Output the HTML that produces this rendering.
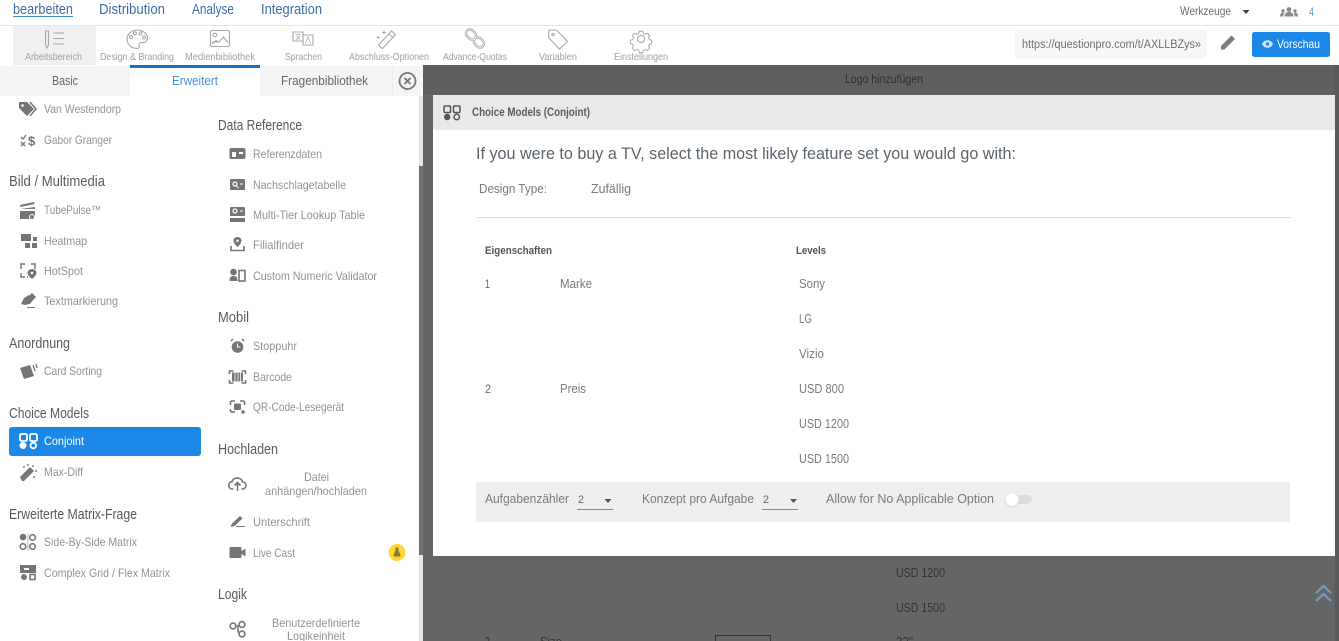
<!DOCTYPE html>
<html lang="de"><head><meta charset="utf-8"><title>Choice Models (Conjoint)</title>
<style>
html,body{margin:0;padding:0;background:#fff;width:1339px;height:641px;overflow:hidden}
svg{display:block;filter:blur(.35px)}
text{font-family:"Liberation Sans",sans-serif}
.nav{font-size:15px;fill:#3a6ea8}
.tb{font-size:10.5px;fill:#a0a0a0}
.it{font-size:12px;fill:#939393}
.h{font-size:15px;fill:#5a5a5a}
.tab{font-size:13px;fill:#666}
.m{font-size:13px;fill:#7a7a7a}
.b{font-size:11px;font-weight:bold;fill:#555}
.d{font-size:12.5px;fill:#333}
.ln{fill:none;stroke:#a8a8a8;stroke-width:1.1}
.ic{fill:#757575}
.is{fill:none;stroke:#757575;stroke-width:1.6}
</style></head><body>
<svg width="1339" height="641" viewBox="0 0 1339 641" xmlns="http://www.w3.org/2000/svg">
<rect width="1339" height="641" fill="#fff"/>
<!-- top nav -->
<rect x="0" y="25" width="1339" height="1" fill="#e6e6e6"/>
<text class="nav" x="13" y="14" textLength="60" lengthAdjust="spacingAndGlyphs">bearbeiten</text>
<rect x="13" y="16" width="60" height="1" fill="#3a8ad0"/>
<text class="nav" x="99" y="14" textLength="66" lengthAdjust="spacingAndGlyphs">Distribution</text>
<text class="nav" x="192" y="14" textLength="42" lengthAdjust="spacingAndGlyphs">Analyse</text>
<text class="nav" x="261" y="14" textLength="61" lengthAdjust="spacingAndGlyphs">Integration</text>
<text x="1180" y="15" font-size="12" fill="#6e6e6e" textLength="51" lengthAdjust="spacingAndGlyphs">Werkzeuge</text>
<path d="M1242.500 10h7l-3.500 4z" fill="#444"/>
<g fill="#8a8a8a"><circle cx="1289" cy="9.500" r="2.400"/><path d="M1284.500 16.500c0-3.500 2-4.500 4.500-4.500s4.500 1 4.500 4.500z"/><circle cx="1283" cy="11" r="1.700"/><path d="M1280 16.500c0-3 1.200-3.800 3-3.800l1 .3-.8 3.500z"/><circle cx="1295" cy="11" r="1.700"/><path d="M1298 16.500c0-3-1.200-3.800-3-3.800l-1 .3.800 3.500z"/></g>
<text x="1309" y="16" font-size="11.500" fill="#5a9bd8" textLength="5" lengthAdjust="spacingAndGlyphs">4</text>
<!-- toolbar -->
<rect x="13" y="26" width="83" height="39" fill="#f0f0f0"/>
<text class="tb" x="25" y="60" textLength="57" lengthAdjust="spacingAndGlyphs">Arbeitsbereich</text>
<text class="tb" x="100" y="60" textLength="74" lengthAdjust="spacingAndGlyphs">Design &amp; Branding</text>
<text class="tb" x="185" y="60" textLength="70" lengthAdjust="spacingAndGlyphs">Medienbibliothek</text>
<text class="tb" x="285" y="60" textLength="37" lengthAdjust="spacingAndGlyphs">Sprachen</text>
<text class="tb" x="349" y="60" textLength="80" lengthAdjust="spacingAndGlyphs">Abschluss-Optionen</text>
<text class="tb" x="443" y="60" textLength="64" lengthAdjust="spacingAndGlyphs">Advance-Quotas</text>
<text class="tb" x="539" y="60" textLength="38" lengthAdjust="spacingAndGlyphs">Variablen</text>
<text class="tb" x="614" y="60" textLength="54" lengthAdjust="spacingAndGlyphs">Einstellungen</text>
<!-- toolbar icons -->
<path class="ln" d="M45.500 31h3v14l-1.500 3-1.500-3zM53 33h11M53 38.500h11M53 44h11"/>
<path class="ln" d="M137 30c6 0 10.500 3.700 10.500 8.300 0 3.400-2.500 4.500-5 4.200-2.800-.3-4.100 1-3.300 3 .7 1.800-.2 2.900-2.200 2.900-5.800 0-9.900-4-9.900-9.200 0-5.200 4.500-9.200 9.900-9.200z"/>
<circle class="ln" cx="131" cy="37" r="1.500"/><circle class="ln" cx="135" cy="33.300" r="1.500"/><circle class="ln" cx="140.500" cy="33.500" r="1.500"/><circle class="ln" cx="144" cy="37.500" r="1.500"/>
<rect class="ln" x="210.500" y="30.500" width="19" height="16" rx="1.500"/><circle class="ln" cx="215" cy="35" r="1.800"/><path class="ln" d="M212 44l4-3.500 3 1.500 4.500-5 4.500 5.500M212 42h6"/>
<path class="ln" d="M293 32h10v9h-10zM303 35h10v10h-10z"/><path d="M295.500 34.500h5M298 34v1.500M296 40l4-4M296.500 36l3.500 3.500M305.500 43l2.500-6 2.500 6" fill="none" stroke="#a8a8a8" stroke-width=".8"/>
<path class="ln" d="M381 47.500l-2.500-2.500 13-14 4 3.500-13 14zM389 34l4 3.500"/><path d="M384 30.500v4M382 32.500h4M378 36v3M376.500 37.500h3" stroke="#a8a8a8" stroke-width=".9" fill="none"/>
<g fill="none" stroke="#a8a8a8"><rect x="465.500" y="30.500" width="11" height="8" rx="4" transform="rotate(45 471 34.500)" stroke-width="2.400"/><rect x="473.500" y="38.500" width="11" height="8" rx="4" transform="rotate(45 479 42.500)" stroke-width="2.400"/></g><g fill="none" stroke="#fff" stroke-width=".7"><rect x="465.500" y="30.500" width="11" height="8" rx="4" transform="rotate(45 471 34.500)"/><rect x="473.500" y="38.500" width="11" height="8" rx="4" transform="rotate(45 479 42.500)"/></g>
<path class="ln" d="M549 30h7.500l11 11.500-8 7.500-11-11.500z"/><circle class="ln" cx="553" cy="34.500" r="1.200"/>
<path class="ln" d="M639 30h4l.6 2.600 2.300 1 2.400-1.300 2.800 2.800-1.300 2.400 1 2.300 2.600.6v4l-2.600.6-1 2.300 1.300 2.400-2.800 2.800-2.400-1.300-2.300 1-.6 2.600h-4l-.6-2.600-2.300-1-2.400 1.300-2.800-2.800 1.300-2.400-1-2.300-2.600-.6v-4l2.600-.6 1-2.300-1.300-2.400 2.800-2.800 2.400 1.300 2.300-1z" transform="translate(641 39) scale(.86) translate(-641 -39)"/><circle class="ln" cx="641" cy="39" r="3.600"/>
<!-- url / preview -->
<rect x="1015" y="30" width="192" height="29" rx="4" fill="#f7f7f7"/>
<text x="1022" y="48" font-size="11.500" fill="#6e6e6e" textLength="179" lengthAdjust="spacingAndGlyphs">https://questionpro.com/t/AXLLBZys&#187;</text>
<path d="M1221 49.500v-3.500l10.500-10.500 3.500 3.500-10.500 10.500z" fill="#7d7d7d"/>
<rect x="1252" y="32" width="78" height="25" rx="2.500" fill="#1b87e6"/>
<path d="M1262 44c2-5 9-5 11 0-2 5-9 5-11 0z" fill="#cfe6fb"/><circle cx="1267.500" cy="44" r="1.700" fill="#1b87e6"/>
<text x="1277" y="48" font-size="12" fill="#fff" textLength="43" lengthAdjust="spacingAndGlyphs">Vorschau</text>
<!-- overlay -->
<rect x="423" y="65" width="916" height="576" fill="#666"/>
<rect x="423" y="65" width="916" height="30" fill="#5f5f5f"/>
<rect x="1335" y="65" width="4" height="576" fill="#5a5a5a"/>
<text x="845" y="83" font-size="11.500" fill="#2f2f2f" textLength="78" lengthAdjust="spacingAndGlyphs">Logo hinzuf&#252;gen</text>
<text class="d" x="896" y="577" textLength="49" lengthAdjust="spacingAndGlyphs">USD 1200</text>
<text class="d" x="896" y="612" textLength="49" lengthAdjust="spacingAndGlyphs">USD 1500</text>
<text class="d" x="485" y="646" textLength="5" lengthAdjust="spacingAndGlyphs">3</text>
<text class="d" x="540" y="646" textLength="22" lengthAdjust="spacingAndGlyphs">Size</text>
<rect x="715.500" y="635.500" width="55" height="12" fill="none" stroke="#333"/>
<text class="d" x="896" y="646" textLength="17" lengthAdjust="spacingAndGlyphs">32"</text>
<path d="M1316 593l7.500-7 7.500 7M1316 601l7.500-7 7.500 7" fill="none" stroke="#6d9cc6" stroke-width="2.200"/>
<!-- modal -->
<rect x="433" y="95" width="902" height="461" fill="#fff"/>
<rect x="433" y="95" width="902" height="35" fill="#e9e9e9"/>
<g fill="none" stroke="#555" stroke-width="1.500"><rect x="444" y="106" width="6.500" height="6.500" rx="1"/><rect x="453.500" y="106" width="6.500" height="6.500" rx="1"/><circle cx="456.700" cy="117" r="2.700"/></g><circle cx="447.200" cy="117" r="3.200" fill="#555"/>
<text x="472" y="116" font-size="11.500" font-weight="bold" fill="#5a5a5a" textLength="118" lengthAdjust="spacingAndGlyphs">Choice Models (Conjoint)</text>
<text x="476" y="159" font-size="17" fill="#5c646b" textLength="540" lengthAdjust="spacingAndGlyphs">If you were to buy a TV, select the most likely feature set you would go with:</text>
<text class="m" x="479" y="193" textLength="68" lengthAdjust="spacingAndGlyphs">Design Type:</text>
<text class="m" x="591" y="193" textLength="40" lengthAdjust="spacingAndGlyphs">Zuf&#228;llig</text>
<rect x="476" y="217" width="815" height="1" fill="#ddd"/>
<text class="b" x="485" y="254" textLength="67" lengthAdjust="spacingAndGlyphs">Eigenschaften</text>
<text class="b" x="796" y="254" textLength="30" lengthAdjust="spacingAndGlyphs">Levels</text>
<text x="485" y="288" font-size="11.500" fill="#666" textLength="5" lengthAdjust="spacingAndGlyphs">1</text>
<text class="m" x="560" y="288" textLength="32" lengthAdjust="spacingAndGlyphs">Marke</text>
<text class="m" x="799" y="288" textLength="26" lengthAdjust="spacingAndGlyphs">Sony</text>
<text class="m" x="799" y="323" textLength="13" lengthAdjust="spacingAndGlyphs">LG</text>
<text class="m" x="799" y="358" textLength="25" lengthAdjust="spacingAndGlyphs">Vizio</text>
<text x="485" y="393" font-size="11.500" fill="#666" textLength="6" lengthAdjust="spacingAndGlyphs">2</text>
<text class="m" x="560" y="393" textLength="26" lengthAdjust="spacingAndGlyphs">Preis</text>
<text class="m" x="799" y="393" textLength="45" lengthAdjust="spacingAndGlyphs">USD 800</text>
<text class="m" x="799" y="428" textLength="50" lengthAdjust="spacingAndGlyphs">USD 1200</text>
<text class="m" x="799" y="463" textLength="50" lengthAdjust="spacingAndGlyphs">USD 1500</text>
<rect x="476" y="482" width="814" height="40" fill="#eee"/>
<text class="m" x="485" y="503" textLength="84" lengthAdjust="spacingAndGlyphs">Aufgabenz&#228;hler</text>
<text x="578" y="503" font-size="11" fill="#666" textLength="6" lengthAdjust="spacingAndGlyphs">2</text>
<path d="M604.500 499h7l-3.500 4z" fill="#555"/><rect x="577" y="509" width="36" height="1" fill="#888"/>
<text class="m" x="642" y="503" textLength="112" lengthAdjust="spacingAndGlyphs">Konzept pro Aufgabe</text>
<text x="763" y="503" font-size="11" fill="#666" textLength="6" lengthAdjust="spacingAndGlyphs">2</text>
<path d="M790 499h7l-3.500 4z" fill="#555"/><rect x="762" y="509" width="36" height="1" fill="#888"/>
<text class="m" x="826" y="503" textLength="168" lengthAdjust="spacingAndGlyphs">Allow for No Applicable Option</text>
<rect x="1008" y="495" width="24" height="9" rx="4.500" fill="#ddd"/>
<circle cx="1012" cy="500" r="7.500" fill="#ddd"/><circle cx="1012" cy="499.500" r="6.500" fill="#fff"/>
<!-- tabs -->
<rect x="0" y="66" width="423" height="30" fill="#f5f5f5"/>
<rect x="130" y="66" width="130" height="30" fill="#fff"/>
<rect x="130" y="65" width="130" height="3" fill="#1b6fc0"/>
<rect x="392" y="66" width="1" height="30" fill="#ececec"/>
<text class="tab" x="52" y="85" textLength="26" lengthAdjust="spacingAndGlyphs">Basic</text>
<text class="tab" x="172" y="85" textLength="46" lengthAdjust="spacingAndGlyphs" style="fill:#4c90d6">Erweitert</text>
<text class="tab" x="281" y="85" textLength="87" lengthAdjust="spacingAndGlyphs">Fragenbibliothek</text>
<circle cx="407.500" cy="81" r="8" fill="none" stroke="#777" stroke-width="1.800"/><path d="M404.500 78l6 6M410.500 78l-6 6" stroke="#777" stroke-width="1.800"/>
<!-- scrollbar -->
<rect x="419" y="96" width="4" height="545" fill="#e6e6e6"/>
<rect x="419" y="166" width="4" height="389" fill="#707070"/>
<!-- left list -->
<text class="it" x="44" y="113" textLength="77" lengthAdjust="spacingAndGlyphs">Van Westendorp</text>
<text class="it" x="44" y="144" textLength="68" lengthAdjust="spacingAndGlyphs">Gabor Granger</text>
<text class="h" x="9" y="186" textLength="96" lengthAdjust="spacingAndGlyphs">Bild / Multimedia</text>
<text class="it" x="44" y="214" textLength="57" lengthAdjust="spacingAndGlyphs">TubePulse&#8482;</text>
<text class="it" x="44" y="245" textLength="43" lengthAdjust="spacingAndGlyphs">Heatmap</text>
<text class="it" x="44" y="275" textLength="39" lengthAdjust="spacingAndGlyphs">HotSpot</text>
<text class="it" x="44" y="305" textLength="74" lengthAdjust="spacingAndGlyphs">Textmarkierung</text>
<text class="h" x="9" y="348" textLength="61" lengthAdjust="spacingAndGlyphs">Anordnung</text>
<text class="it" x="44" y="375" textLength="58" lengthAdjust="spacingAndGlyphs">Card Sorting</text>
<text class="h" x="9" y="418" textLength="80" lengthAdjust="spacingAndGlyphs">Choice Models</text>
<rect x="9" y="427" width="192" height="29" rx="3" fill="#1b87e6"/>
<text class="it" x="44" y="445" textLength="40" lengthAdjust="spacingAndGlyphs" style="fill:#fff">Conjoint</text>
<text class="it" x="44" y="476" textLength="39" lengthAdjust="spacingAndGlyphs">Max-Diff</text>
<text class="h" x="9" y="519" textLength="128" lengthAdjust="spacingAndGlyphs">Erweiterte Matrix-Frage</text>
<text class="it" x="44" y="546" textLength="93" lengthAdjust="spacingAndGlyphs">Side-By-Side Matrix</text>
<text class="it" x="44" y="577" textLength="126" lengthAdjust="spacingAndGlyphs">Complex Grid / Flex Matrix</text>
<!-- left icons -->
<path class="ic" d="M19 102h8l7 7-7 7-8-8z"/><path d="M30 102l6 7-6 7" fill="none" stroke="#757575" stroke-width="1.500"/><circle cx="22.500" cy="105.500" r="1.300" fill="#fff"/>
<path d="M21 137l2 2 3-4M21 142l4 4M25 142l-4 4" fill="none" stroke="#757575" stroke-width="1.300"/><text x="28" y="145.500" font-size="13" font-weight="bold" fill="#757575">$</text>
<path class="ic" d="M20 209l15-2v2H20zM20 211h15v5l-3 3H20z"/><path d="M20 205l14-3 .5 2-14 3z" fill="#757575"/><circle cx="32" cy="217" r="2.500" fill="#757575" stroke="#fff"/>
<path class="ic" d="M21 234h10v7H21zM33 237h4v4h-4zM25 243h5v5h-5zM32 243h5v5h-5z"/>
<path d="M25 264h-4v5M31 264h4v5M21 273v4h4M28 277h-1" fill="none" stroke="#757575" stroke-width="1.400"/><path class="ic" d="M32 269c2.500 0 4.500 1.800 4.500 4 0 2.500-4.500 6-4.500 6s-4.500-3.500-4.500-6c0-2.200 2-4 4.500-4z"/><circle cx="32" cy="273" r="1.300" fill="#fff"/>
<path class="ic" d="M21 304l3-6 5-3 4 5-3 4-5 1zM29 296l3-3 4 4-3 3z"/><rect x="27" y="307" width="8" height="1" fill="#757575"/>
<path class="ic" d="M20 368l10-3 4 11-10 3z"/><path d="M33 365l2 6M36 364l1 4" stroke="#757575" stroke-width="1.300" fill="none"/>
<g fill="none" stroke="#fff" stroke-width="1.800"><rect x="20" y="434" width="7" height="7" rx="1.500"/><rect x="30" y="434" width="7" height="7" rx="1.500"/><circle cx="33.300" cy="445.500" r="2.800"/></g><circle cx="23" cy="445.500" r="3.500" fill="#fff"/>
<path class="ic" d="M20 477l10-10 4 4-10 10-2 0z"/><path d="M24 466v2M33 465v2M36 470v2M34 476v2M28 464v2" stroke="#757575" stroke-width="1.400"/>
<circle cx="23" cy="537" r="3.300" class="ic"/><circle cx="32.500" cy="537.500" r="2.800" class="is"/><circle cx="23" cy="546.500" r="2.800" class="is"/><circle cx="32.500" cy="546.500" r="2.800" class="is"/><rect x="27.300" y="533" width="1" height="18" fill="#bbb"/>
<rect x="20" y="565" width="16" height="8" class="ic"/><rect x="24" y="568" width="5" height="2" fill="#fff"/><circle cx="24" cy="577" r="3" class="ic"/><rect x="30" y="574.500" width="5" height="5" class="is" stroke-width="1"/>
<!-- right list -->
<text class="h" x="218" y="130" textLength="84" lengthAdjust="spacingAndGlyphs">Data Reference</text>
<text class="it" x="253" y="158" textLength="69" lengthAdjust="spacingAndGlyphs">Referenzdaten</text>
<text class="it" x="253" y="189" textLength="93" lengthAdjust="spacingAndGlyphs">Nachschlagetabelle</text>
<text class="it" x="253" y="219" textLength="112" lengthAdjust="spacingAndGlyphs">Multi-Tier Lookup Table</text>
<text class="it" x="253" y="249" textLength="51" lengthAdjust="spacingAndGlyphs">Filialfinder</text>
<text class="it" x="253" y="280" textLength="124" lengthAdjust="spacingAndGlyphs">Custom Numeric Validator</text>
<text class="h" x="218" y="322" textLength="31" lengthAdjust="spacingAndGlyphs">Mobil</text>
<text class="it" x="253" y="350" textLength="44" lengthAdjust="spacingAndGlyphs">Stoppuhr</text>
<text class="it" x="253" y="381" textLength="39" lengthAdjust="spacingAndGlyphs">Barcode</text>
<text class="it" x="253" y="411" textLength="91" lengthAdjust="spacingAndGlyphs">QR-Code-Leseger&#228;t</text>
<text class="h" x="218" y="454" textLength="60" lengthAdjust="spacingAndGlyphs">Hochladen</text>
<text class="it" x="304" y="481" textLength="25" lengthAdjust="spacingAndGlyphs">Datei</text>
<text class="it" x="265" y="495" textLength="102" lengthAdjust="spacingAndGlyphs">anh&#228;ngen/hochladen</text>
<text class="it" x="253" y="526" textLength="57" lengthAdjust="spacingAndGlyphs">Unterschrift</text>
<text class="it" x="253" y="557" textLength="42" lengthAdjust="spacingAndGlyphs">Live Cast</text>
<text class="h" x="218" y="599" textLength="29" lengthAdjust="spacingAndGlyphs">Logik</text>
<text class="it" x="272" y="627" textLength="88" lengthAdjust="spacingAndGlyphs">Benutzerdefinierte</text>
<text class="it" x="287" y="640" textLength="58" lengthAdjust="spacingAndGlyphs">Logikeinheit</text>
<!-- right icons -->
<rect x="229.500" y="148" width="16" height="11" rx="2" class="ic"/><rect x="232" y="152" width="4" height="5" fill="#fff"/><rect x="239" y="152" width="4" height="2" fill="#fff"/>
<rect x="230" y="179" width="15" height="11" rx="1" class="ic"/><circle cx="235" cy="184" r="2" fill="none" stroke="#fff" stroke-width="1.200"/><path d="M236.500 186l2 2M240 184h3" stroke="#fff"/>
<rect x="230" y="207" width="15" height="9" rx="1" class="ic"/><circle cx="235" cy="211" r="2" fill="none" stroke="#fff" stroke-width="1.200"/><path d="M240 211h3" stroke="#fff"/><rect x="230" y="218" width="15" height="4" class="ic"/>
<path class="ic" d="M237.500 237c2.500 0 4 1.700 4 3.700 0 2.500-4 6.300-4 6.300s-4-3.800-4-6.300c0-2 1.500-3.700 4-3.700z"/><circle cx="237.500" cy="240.800" r="1.300" fill="#fff"/><path d="M231 246v4.500h13V246" class="is"/>
<circle cx="233.500" cy="272" r="3.300" class="ic"/><path class="ic" d="M229.500 281c0-4 1.500-5 4-5s4 1 4 5z"/><rect x="239" y="270.500" width="6" height="10.500" class="is" stroke-width="1.300"/>
<circle cx="237.500" cy="347" r="5.800" class="ic"/><path d="M231 341l2-2M244 341l-2-2" stroke="#757575" stroke-width="1.500"/><path d="M237.500 343.500v3.500h3" stroke="#fff" fill="none"/>
<path d="M229.500 374v-3h4M241.500 371h4v3M229.500 380v3h4M241.500 383h4v-3" class="is" stroke-width="1.300"/><path d="M232 372.500h11v9h-11z" class="ic"/><path d="M235 372.500v9M238 372.500v9M240.500 372.500v9" stroke="#fff" stroke-width=".8"/>
<path d="M235 401h-3.500l-1 1v3M240 401h3.500l1 1v3M230.500 409v2l1 1H235" class="is" stroke-width="1.300"/><rect x="234" y="403.500" width="7" height="6.500" rx="1" class="ic"/><circle cx="243" cy="412" r="1.800" class="ic"/>
<path class="is" d="M233.500 489h-1c-2.500 0-3.800-1.800-3.800-3.700 0-2 1.500-3.400 3.200-3.400.6-2.300 2.800-4 5.300-4 2.700 0 5 1.800 5.400 4.100 1.800 0 3.400 1.400 3.400 3.300 0 2-1.400 3.700-3.600 3.700h-1"/><path class="is" d="M237.500 491v-8M234.500 485.500l3-3 3 3"/>
<path class="ic" d="M230.500 527l1.500-3.500 8-7.500 2.500 2.500-8 7.500z"/><rect x="236" y="526" width="9" height="1" fill="#757575"/>
<rect x="229.500" y="547" width="12" height="11" rx="1" class="ic"/><path class="ic" d="M241.500 551l4-2.500v8l-4-2.500z"/>
<circle cx="233" cy="626" r="2.900" class="is"/><circle cx="242" cy="624.500" r="2.900" class="is"/><circle cx="242" cy="634" r="2.900" class="is"/><path class="is" d="M236 626h3M238 626v5l1 2"/>
<circle cx="397" cy="552.500" r="8.500" fill="#fdd835"/><path d="M395.500 547.500h3v3l2 4.500c.3.800-.2 1.500-1 1.500h-5c-.8 0-1.300-.7-1-1.500l2-4.500z" fill="#8d7a2a"/>
</svg>
</body></html>
